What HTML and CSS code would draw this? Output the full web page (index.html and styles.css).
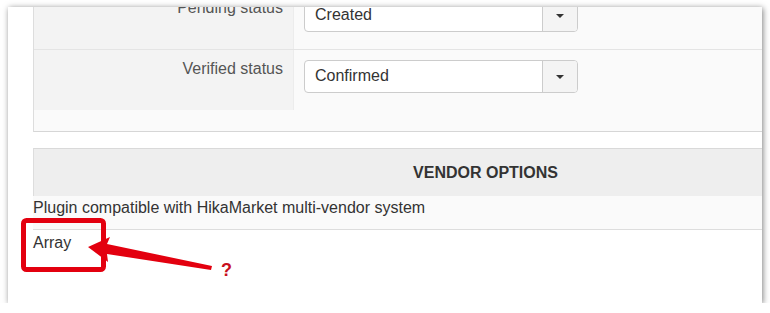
FILE: index.html
```html
<!DOCTYPE html>
<html lang="en">
<head>
  <meta charset="UTF-8" />
  <title>Vendor options</title>
  <link rel="stylesheet" href="styles.css">
</head>
<body>
  <div class="shot">
    <div class="content">
      <div class="params">
        <div class="row">
          <div class="label">Pending status</div>
          <div class="value">
            <div class="select"><span class="current">Created</span><span class="caret-btn"><i class="caret"></i></span></div>
          </div>
        </div>
        <div class="row last">
          <div class="label">Verified status</div>
          <div class="value">
            <div class="select"><span class="current">Confirmed</span><span class="caret-btn"><i class="caret"></i></span></div>
          </div>
        </div>
      </div>

      <div class="section-head">VENDOR OPTIONS</div>
      <div class="note">Plugin compatible with HikaMarket multi-vendor system</div>
      <div class="array">Array</div>
    </div>

    <!-- annotation drawn over the capture -->
    <svg class="mark" width="260" height="72" viewBox="0 0 260 72">
      <rect x="15.5" y="4.5" width="80" height="49" rx="3" fill="none" stroke="#e3000f" stroke-width="5" />
      <path d="M80 31 L102 21 L99 28 L204 50 L203 54 L99 38 L100 46 Z" fill="#e3000f" />
      <text x="213" y="60" class="qmark">?</text>
    </svg>
  </div>
</body>
</html>
```

FILE: styles.css
```css
body {
  margin: 0;
  background: #fff;
  font-family: 'Liberation Sans', Arial, sans-serif;
}

.shot {
  position: relative;
  margin: 7px 0 0 8px;
  width: 754px;
  height: 296px;
  background: #fff;
  overflow: hidden;
  box-shadow: 1px 1px 6px rgba(0,0,0,0.5);
}

.content {
  margin-top: -18px;
  margin-left: 25px;
  width: 904px;
}

.params {
  background: #fafafa;
  border-left: 1px solid #ddd;
  border-bottom: 1px solid #d6d6d6;
  padding-bottom: 21px;
}

.row {
  display: flex;
  border-bottom: 1px solid #e4e4e4;
}

.row.last {
  border-bottom: none;
}

.label {
  width: 249px;
  padding: 10px 10px 0 0;
  background: #f3f3f3;
  border-right: 1px solid #ececec;
  text-align: right;
  font-size: 16px;
  color: #555;
}

.value {
  padding: 10px 10px 17px 10px;
}

.select {
  display: flex;
  width: 272px;
  height: 31px;
  border: 1px solid #ccc;
  border-radius: 4px;
  background: #fff;
  overflow: hidden;
}

.current {
  flex: 1;
  padding: 6px 0 0 10px;
  font-size: 16px;
  color: #333;
}

.caret-btn {
  width: 34px;
  display: flex;
  align-items: center;
  justify-content: center;
  background: #f4f4f4;
  border-left: 1px solid #ccc;
}

.caret {
  width: 0;
  height: 0;
  border-left: 4px solid transparent;
  border-right: 4px solid transparent;
  border-top: 4px solid #333;
}

.section-head {
  margin-top: 16px;
  height: 47px;
  line-height: 47px;
  background: #eee;
  border-top: 1px solid #d9d9d9;
  border-left: 1px solid #ddd;
  text-align: center;
  font-size: 16px;
  font-weight: bold;
  color: #333;
}

.note {
  height: 33px;
  line-height: 24px;
  background: #fafafa;
  border-bottom: 1px solid #ddd;
  font-size: 16px;
  color: #333;
}

.array {
  padding-top: 4px;
  font-size: 16px;
  color: #333;
}

.mark {
  position: absolute;
  left: 0;
  top: 209px;
}

.qmark {
  font-family: 'Liberation Sans', Arial, sans-serif;
  font-size: 18px;
  font-weight: bold;
  fill: #c8101e;
}
```
